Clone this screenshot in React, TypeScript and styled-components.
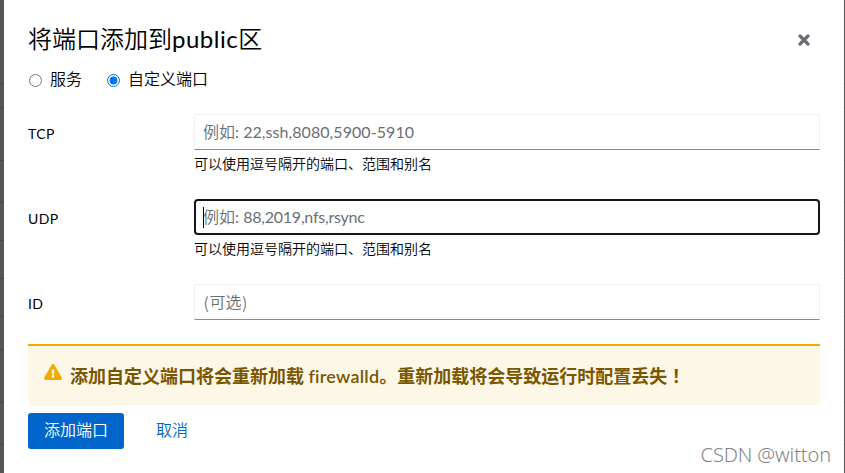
import React from 'react';
import styled, { createGlobalStyle } from 'styled-components';

const Global = createGlobalStyle`
  *, *::before, *::after { box-sizing: border-box; }
  body { margin: 0; overflow: hidden; background: #575553; }
`;

const Backdrop = styled.div`
  position: relative;
  display: flex;
  height: 473px;
  width: 845px;
  background: #575553;
  font-family: Lato, "Noto Sans CJK SC", sans-serif;
  font-weight: 350;
  color: #151515;
`;

const PageEdge = styled.div<{ $width: number }>`
  width: ${p => p.$width}px;
  flex: none;
  display: flex;
  flex-direction: column;
`;

const EdgeRow = styled.div<{ $height: number }>`
  height: ${p => p.$height}px;
  flex: none;
  border-bottom: 1px solid #464543;
`;

const Dialog = styled.section`
  flex: 1;
  min-width: 0;
  background: #fff;
  padding: 20px 24px 0;
  display: flex;
  flex-direction: column;
`;

const Header = styled.header`
  display: flex;
  justify-content: space-between;
  height: 38px;
`;

const Title = styled.h1`
  margin: 0;
  font-size: 24px;
  font-weight: 350;
  line-height: 38px;
  color: #000;
  white-space: nowrap;
`;

const Latin = styled.span<{ $track?: number; $weight?: number }>`
  letter-spacing: ${p => p.$track ?? 0}px;
  font-weight: ${p => p.$weight ?? 400};
`;

const CloseButton = styled.button`
  border: 0;
  padding: 0;
  width: 16px;
  height: 16px;
  margin: 12px 8px 0 0;
  background: none;
  color: #6a6e73;
  svg { display: block; }
`;

const RadioGroup = styled.div`
  display: flex;
  gap: 24px;
  height: 24px;
  margin-top: 10px;
`;

const RadioLabel = styled.label`
  display: flex;
  font-size: 16px;
  line-height: 22px;
  color: #000;
`;

const Radio = styled.input`
  width: 13px;
  height: 13px;
  margin: 6px 8px 0 1px;
`;

const Form = styled.div`
  margin-top: 22px;
`;

const FormRow = styled.div<{ $height: number }>`
  display: grid;
  grid-template-columns: 166px 1fr;
  height: ${p => p.$height}px;
`;

const FieldLabel = styled.span`
  font-size: 14px;
  font-weight: 400;
  line-height: 21px;
  padding-top: 9px;
  letter-spacing: 0.4px;
  color: #000;
`;

const Field = styled.div<{ $focused?: boolean }>`
  height: 36px;
  border: 1px solid #f0f0f0;
  border-bottom-color: #8a8d90;
  padding-left: 8px;
  display: flex;
  align-items: center;
  font-size: 16px;
  line-height: 24px;
  color: #6a6e73;
  white-space: pre;
  ${p => (p.$focused ? 'border: 2px solid #151515; border-radius: 4px; padding-left: 7px;' : '')}
`;

const Caret = styled.i`
  width: 1px;
  height: 21px;
  margin-right: -1px;
  background: #000;
`;

const Helper = styled.div`
  margin-top: 3px;
  font-size: 14px;
  line-height: 21px;
  color: #000;
`;

const Alert = styled.div`
  height: 61px;
  flex: none;
  background: #fdf7e7;
  border-top: 2px solid #f0ab00;
  padding: 16px;
  display: flex;
  color: #795600;
  svg { display: block; margin: 2px 8px 0 0; flex: none; }
`;

const AlertText = styled.strong`
  font-size: 18px;
  font-weight: 700;
  line-height: 27px;
  white-space: pre;
`;

const CenteredMark = styled.span`
  font-family: "Noto Sans CJK TC", sans-serif;
`;

const Paren = styled.span`
  width: 6.5px;
  text-align: center;
  font-family: "Noto Sans CJK SC", sans-serif;
`;

const Footer = styled.footer`
  display: flex;
  margin-top: 8px;
  gap: 16px;
`;

const Button = styled.button<{ $primary?: boolean }>`
  height: 36px;
  padding: 0 16px 2px;
  border: 0;
  border-radius: 3px;
  font-family: inherit;
  font-size: 16px;
  font-weight: 350;
  line-height: 24px;
  background: ${p => (p.$primary ? '#06c' : 'transparent')};
  color: ${p => (p.$primary ? '#fff' : '#06c')};
`;

const Watermark = styled.span`
  position: absolute;
  right: 14px;
  bottom: 4px;
  font-family: "Noto Sans", sans-serif;
  font-size: 20px;
  font-weight: 300;
  line-height: 28px;
  letter-spacing: -0.12px;
  color: #858585;
  white-space: nowrap;
`;

const edgeRows = [84, 24, 53, 42, 38, 38, 38, 33, 53, 42];

export default function App() {
  return (
    <>
      <Global />
      <Backdrop>
        <PageEdge $width={4}>
          {edgeRows.map((h, i) => <EdgeRow key={i} $height={h} />)}
        </PageEdge>
        <Dialog>
          <Header>
            <Title>将端口添加到<Latin $track={0.5}>public</Latin>区</Title>
            <CloseButton aria-label="关闭">
              <svg width="16" height="16" viewBox="0 0 16 16" stroke="currentColor" strokeWidth="3.2" strokeLinecap="round">
                <path d="M4 4l8 8M12 4l-8 8" />
              </svg>
            </CloseButton>
          </Header>
          <RadioGroup>
            <RadioLabel><Radio type="radio" name="kind" />服务</RadioLabel>
            <RadioLabel><Radio type="radio" name="kind" defaultChecked />自定义端口</RadioLabel>
          </RadioGroup>
          <Form>
            <FormRow $height={85}>
              <FieldLabel>TCP</FieldLabel>
              <div>
                <Field>例如<Latin>: </Latin><Latin $track={0.07}>22,ssh,8080,5900-5910</Latin></Field>
                <Helper>可以使用逗号隔开的端口、范围和别名</Helper>
              </div>
            </FormRow>
            <FormRow $height={85}>
              <FieldLabel>UDP</FieldLabel>
              <div>
                <Field $focused><Caret />例如<Latin>: </Latin><Latin $track={-0.22}>88,2019,nfs,rsync</Latin></Field>
                <Helper>可以使用逗号隔开的端口、范围和别名</Helper>
              </div>
            </FormRow>
            <FormRow $height={60}>
              <FieldLabel>ID</FieldLabel>
              <Field><Paren>(</Paren>可选<Paren>)</Paren></Field>
            </FormRow>
          </Form>
          <Alert>
            <svg width="18" height="16" viewBox="0 0 576 512" fill="#f0ab00">
              <path d="M569.5 440c18.500 32-4.700 72-41.600 72H48c-36.900 0-60-40.100-41.600-72L246.400 24c18.500-32 64.700-32 83.200 0l239.900 416zM288 354a46 46 0 1 0 0 92 46 46 0 0 0 0-92zm-43.700-165.300l7.400 136c.4 6.400 5.600 11.300 12 11.300h48.500c6.400 0 11.700-4.900 12-11.300l7.400-136c.4-6.900-5.100-12.700-12-12.700h-63.400c-6.900 0-12.300 5.800-11.900 12.700z" />
            </svg>
            <AlertText>添加自定义端口将会重新加载 <Latin $weight={600} $track={0.25}>firewalld</Latin>。重新加载将会导致运行时配置丢失<CenteredMark>！</CenteredMark></AlertText>
          </Alert>
          <Footer>
            <Button $primary>添加端口</Button>
            <Button>取消</Button>
          </Footer>
        </Dialog>
        <PageEdge $width={1}>
          {edgeRows.map((h, i) => <EdgeRow key={i} $height={h} />)}
        </PageEdge>
        <Watermark>CSDN @witton</Watermark>
      </Backdrop>
    </>
  );
}
